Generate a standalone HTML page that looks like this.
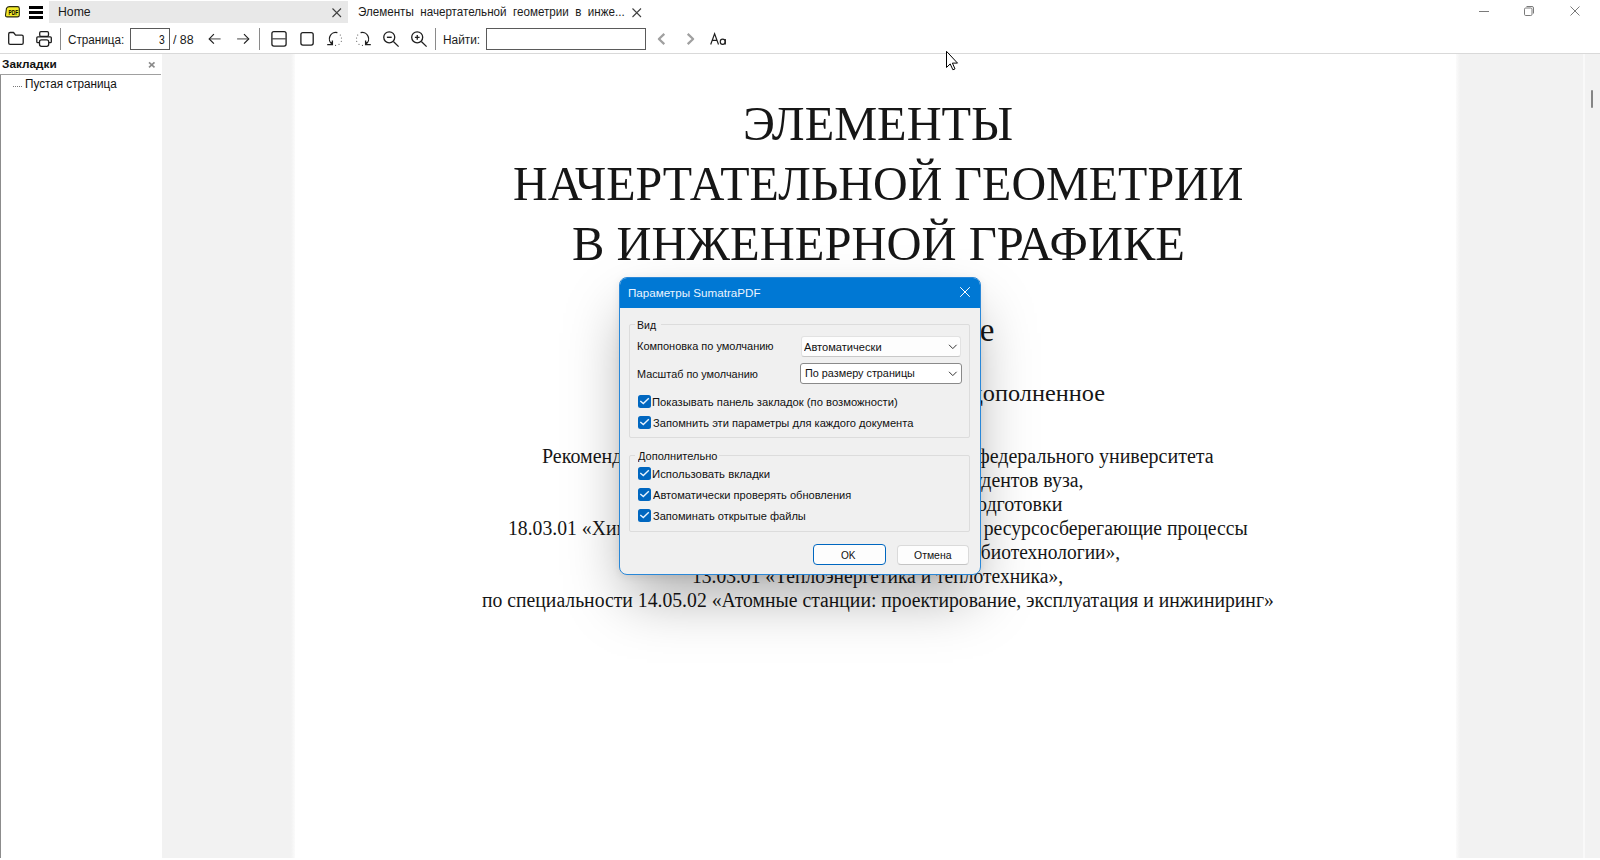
<!DOCTYPE html>
<html><head><meta charset="utf-8">
<style>
*{margin:0;padding:0;box-sizing:border-box}
html,body{width:1600px;height:860px;overflow:hidden;background:#fff;font-family:"Liberation Sans",sans-serif;color:#000}
.a{position:absolute}
.t{position:absolute;white-space:nowrap;line-height:1}
svg{position:absolute;overflow:visible}
</style></head><body>
<div class="a" style="left:0px;top:0px;width:1600px;height:54px;background:#fff;"></div>
<div class="a" style="left:49px;top:1px;width:299px;height:22px;background:#e8e8e8;"></div>
<div class="a" style="left:0px;top:53px;width:1600px;height:1px;background:#d9d9d9;"></div>
<div class="a" style="left:0px;top:54px;width:162px;height:806px;background:#fff;"></div>
<div class="a" style="left:0px;top:74px;width:161px;height:1px;background:#a0a0a0;"></div>
<div class="a" style="left:0px;top:75px;width:1px;height:785px;background:#8c8c8c;"></div>
<div class="a" style="left:162px;top:54px;width:1438px;height:806px;background:#f2f2f2;"></div>
<div class="a" style="left:295px;top:54px;width:1161px;height:806px;background:#fff;"></div>
<div class="a" style="left:291px;top:54px;width:4px;height:806px;background:linear-gradient(to right,#f2f2f2,#fbfbfb);"></div>
<div class="a" style="left:1456px;top:54px;width:4px;height:806px;background:linear-gradient(to left,#f2f2f2,#fbfbfb);"></div>
<div class="a" style="left:1583px;top:54px;width:2px;height:806px;background:#f9f9f9;"></div>
<div class="a" style="left:1591px;top:90px;width:2px;height:18px;background:#858585;border-radius:1px"></div>
<svg style="left:0px;top:0px;" width="24" height="24" viewBox="0 0 24 24"><path d="M6.5 8.2 Q7.5 6.6 9.5 6.6 L17.5 6.6 Q19.3 6.6 19.3 8.4 L19.3 15.2 Q19.3 16.9 17.5 16.9 L7.2 16.9 Q5.3 16.9 5.5 15 Z" fill="#f2ea2a" stroke="#2b2b10" stroke-width="1.1"/>
<text x="8.6" y="15" font-family="Liberation Sans" font-weight="bold" font-size="7" fill="#000" textLength="9.5" lengthAdjust="spacingAndGlyphs">PDF</text></svg>
<div class="a" style="left:29px;top:6px;width:14px;height:3px;background:#000;"></div>
<div class="a" style="left:29px;top:11px;width:14px;height:3px;background:#000;"></div>
<div class="a" style="left:29px;top:16px;width:14px;height:3px;background:#000;"></div>
<div class="t" style="left:58.02px;top:6.00px;font-size:12px;color:#1a1a1a;font-weight:normal;font-family:'Liberation Sans',sans-serif;transform:scaleX(1.0203);transform-origin:left top;">Home</div>
<svg style="left:320px;top:0px;" width="40" height="24" viewBox="320 0 40 24"><path d="M332.5 8.5 L341 17 M341 8.5 L332.5 17" stroke="#404040" stroke-width="1.1"/></svg>
<div class="t" style="left:358.36px;top:6.00px;font-size:12px;color:#1a1a1a;font-weight:normal;font-family:'Liberation Sans',sans-serif;transform:scaleX(0.9690);transform-origin:left top;">Элементы&nbsp; начертательной&nbsp; геометрии&nbsp; в&nbsp; инже...</div>
<svg style="left:620px;top:0px;" width="40" height="24" viewBox="620 0 40 24"><path d="M632.5 8.5 L641 17 M641 8.5 L632.5 17" stroke="#404040" stroke-width="1.1"/></svg>
<svg style="left:1460px;top:0px;" width="140" height="24" viewBox="1460 0 140 24"><path d="M1479 11.5 H1489" stroke="#7a7a7a" stroke-width="1"/>
<rect x="1524.5" y="8" width="7.5" height="7.5" rx="1.2" fill="none" stroke="#7a7a7a" stroke-width="1"/>
<path d="M1526.5 6.5 H1532 Q1533.5 6.5 1533.5 8 V13.5" fill="none" stroke="#7a7a7a" stroke-width="1"/>
<path d="M1570.5 6.5 L1579.5 15.5 M1579.5 6.5 L1570.5 15.5" stroke="#7a7a7a" stroke-width="1"/></svg>
<svg style="left:0px;top:24px;" width="60" height="30" viewBox="0 24 60 30"><path d="M8.7 33.9 Q8.7 32.5 10.1 32.5 L13.5 32.5 L15.6 35.2 L21.8 35.2 Q23.2 35.2 23.2 36.6 L23.2 42.9 Q23.2 44.3 21.8 44.3 L10.1 44.3 Q8.7 44.3 8.7 42.9 Z" fill="none" stroke="#1e1e1e" stroke-width="1.3" stroke-linejoin="round"/></svg>
<svg style="left:0px;top:24px;" width="60" height="30" viewBox="0 24 60 30"><rect x="39.7" y="31.7" width="8.8" height="4.6" rx="1.2" fill="none" stroke="#1e1e1e" stroke-width="1.3"/>
<path d="M39 42.7 L37.8 42.7 Q36.8 42.7 36.8 41.7 L36.8 37.8 Q36.8 36.8 37.8 36.8 L50.3 36.8 Q51.3 36.8 51.3 37.8 L51.3 41.7 Q51.3 42.7 50.3 42.7 L49 42.7" fill="none" stroke="#1e1e1e" stroke-width="1.3"/>
<rect x="39.5" y="39.8" width="9.2" height="6.5" rx="2" fill="#fff" stroke="#1e1e1e" stroke-width="1.3"/></svg>
<div class="a" style="left:60px;top:28px;width:1px;height:22px;background:#8a8a8a;"></div>
<div class="t" style="left:68.11px;top:34.00px;font-size:12.5px;color:#1a1a1a;font-weight:normal;font-family:'Liberation Sans',sans-serif;transform:scaleX(0.9363);transform-origin:left top;">Страница:</div>
<div class="a" style="left:130px;top:28px;width:40px;height:22px;background:#fff;border:1.3px solid #5a5a5a"></div>
<div class="t" style="left:158.89px;top:34.00px;font-size:12px;color:#111;font-weight:normal;font-family:'Liberation Sans',sans-serif;transform:scaleX(0.8596);transform-origin:left top;">3</div>
<div class="t" style="left:173.00px;top:34.00px;font-size:12px;color:#1a1a1a;font-weight:normal;font-family:'Liberation Sans',sans-serif;transform:scaleX(1.0308);transform-origin:left top;">/ 88</div>
<svg style="left:200px;top:24px;" width="60" height="30" viewBox="200 24 60 30"><path d="M220.6 38.9 H210" stroke="#6f6f6f" stroke-width="1.3"/>
<path d="M213.9 34.2 L209.2 38.9 L213.9 43.6" fill="none" stroke="#1e1e1e" stroke-width="1.2"/>
<path d="M237.1 38.9 H247.8" stroke="#6f6f6f" stroke-width="1.3"/>
<path d="M244 34.2 L248.7 38.9 L244 43.6" fill="none" stroke="#1e1e1e" stroke-width="1.2"/></svg>
<div class="a" style="left:259px;top:28px;width:1px;height:22px;background:#8a8a8a;"></div>
<svg style="left:260px;top:24px;" width="60" height="30" viewBox="260 24 60 30"><rect x="271.9" y="31.6" width="14.2" height="14.5" rx="2" fill="none" stroke="#1e1e1e" stroke-width="1.3"/>
<path d="M272 38.8 H286" stroke="#505050" stroke-width="1.3"/>
<rect x="300.9" y="32.6" width="12.3" height="12.5" rx="2" fill="none" stroke="#1e1e1e" stroke-width="1.3"/></svg>
<svg style="left:320px;top:24px;" width="30" height="30" viewBox="320 24 30 30"><path d="M337.4 32.7 A6.4 6.4 0 0 0 332.2 44.2" fill="none" stroke="#1e1e1e" stroke-width="1.3"/>
<path d="M332.4 40.6 V44.6 H327.2" fill="none" stroke="#1e1e1e" stroke-width="1.3"/>
<path d="M332.6 44.1 L330.4 42.4 L332.4 41.8 Z" fill="#1e1e1e"/>
<g fill="#444"><circle cx="340.3" cy="35" r="0.55"/><circle cx="341.4" cy="38" r="0.55"/><circle cx="341.3" cy="41.3" r="0.55"/><circle cx="339" cy="44.2" r="0.55"/><circle cx="335.6" cy="45.4" r="0.55"/></g></svg>
<svg style="left:350px;top:24px;" width="30" height="30" viewBox="350 24 30 30"><path d="M360.6 32.7 A6.4 6.4 0 0 1 365.8 44.2" fill="none" stroke="#1e1e1e" stroke-width="1.3"/>
<path d="M365.6 40.6 V44.6 H370.8" fill="none" stroke="#1e1e1e" stroke-width="1.3"/>
<path d="M365.4 44.1 L367.6 42.4 L365.6 41.8 Z" fill="#1e1e1e"/>
<g fill="#444"><circle cx="357.7" cy="35" r="0.55"/><circle cx="356.6" cy="38" r="0.55"/><circle cx="356.7" cy="41.3" r="0.55"/><circle cx="359" cy="44.2" r="0.55"/><circle cx="362.4" cy="45.4" r="0.55"/></g></svg>
<svg style="left:378px;top:24px;" width="60" height="30" viewBox="378 24 60 30"><circle cx="389.25" cy="37.3" r="5.5" fill="none" stroke="#1e1e1e" stroke-width="1.3"/>
<path d="M393.4 41.5 L398.6 46.6" stroke="#1e1e1e" stroke-width="1.3"/>
<path d="M386.9 37.3 H391.7" stroke="#1e1e1e" stroke-width="1.4"/>
<circle cx="417.2" cy="37.3" r="5.5" fill="none" stroke="#1e1e1e" stroke-width="1.3"/>
<path d="M421.35 41.5 L426.6 46.6" stroke="#1e1e1e" stroke-width="1.3"/>
<path d="M414.9 37.3 H419.6 M417.25 35 V39.8" stroke="#1e1e1e" stroke-width="1.3"/></svg>
<div class="a" style="left:435px;top:28px;width:1px;height:22px;background:#8a8a8a;"></div>
<div class="t" style="left:442.95px;top:34.00px;font-size:12px;color:#1a1a1a;font-weight:normal;font-family:'Liberation Sans',sans-serif;transform:scaleX(0.9882);transform-origin:left top;">Найти:</div>
<div class="a" style="left:486px;top:28px;width:160px;height:22px;background:#fff;border:1.3px solid #5a5a5a"></div>
<svg style="left:650px;top:24px;" width="60" height="30" viewBox="650 24 60 30"><path d="M664.3 33.9 L658.9 39 L664.3 44.1" fill="none" stroke="#a0a0a0" stroke-width="2.3" stroke-linejoin="round"/>
<path d="M687.7 33.9 L693.1 39 L687.7 44.1" fill="none" stroke="#a0a0a0" stroke-width="2.3" stroke-linejoin="round"/></svg>
<svg style="left:705px;top:24px;" width="30" height="30" viewBox="705 24 30 30"><path d="M710.7 44.5 L714.6 33.7 L718.5 44.5 M712.3 40.3 H716.9" fill="none" stroke="#1e1e1e" stroke-width="1.15"/>
<ellipse cx="722.7" cy="41.7" rx="2.45" ry="2.6" fill="none" stroke="#1e1e1e" stroke-width="1.15"/>
<path d="M725.3 39 V44.6" stroke="#1e1e1e" stroke-width="1.15"/></svg>
<div class="t" style="left:2.40px;top:59.00px;font-size:11.5px;color:#111;font-weight:bold;font-family:'Liberation Sans',sans-serif;transform:scaleX(1.0266);transform-origin:left top;">Закладки</div>
<svg style="left:140px;top:54px;" width="20" height="20" viewBox="140 54 20 20"><path d="M149 62.3 L154.5 67.3 M154.5 62.3 L149 67.3" stroke="#8a8a8a" stroke-width="1.6"/></svg>
<svg style="left:10px;top:80px;" width="20" height="10" viewBox="10 80 20 10"><path d="M13 86.5 H22" stroke="#777" stroke-width="1" stroke-dasharray="1 1"/></svg>
<div class="t" style="left:24.56px;top:78.00px;font-size:12px;color:#111;font-weight:normal;font-family:'Liberation Sans',sans-serif;transform:scaleX(0.9762);transform-origin:left top;">Пустая страница</div>
<div class="t" style="left:742.74px;top:99.00px;font-size:49.5px;color:#161616;font-weight:normal;font-family:'Liberation Serif',serif;transform:scaleX(0.9762);transform-origin:left top;">ЭЛЕМЕНТЫ</div>
<div class="t" style="left:512.76px;top:159.00px;font-size:49.5px;color:#161616;font-weight:normal;font-family:'Liberation Serif',serif;transform:scaleX(0.9697);transform-origin:left top;">НАЧЕРТАТЕЛЬНОЙ ГЕОМЕТРИИ</div>
<div class="t" style="left:572.04px;top:219.00px;font-size:49.5px;color:#161616;font-weight:normal;font-family:'Liberation Serif',serif;transform:scaleX(0.9805);transform-origin:left top;">В ИНЖЕНЕРНОЙ ГРАФИКЕ</div>
<div class="t" style="right:605.50px;text-align:right;top:314.00px;font-size:33px;color:#161616;font-weight:normal;font-family:'Liberation Serif',serif;">Учебное пособие</div>
<div class="t" style="right:494.70px;text-align:right;top:383.00px;font-size:22.5px;color:#161616;font-weight:normal;font-family:'Liberation Serif',serif;transform:scaleX(1.0800);transform-origin:right top;">Издание второе, исправленное и дополненное</div>
<div class="t" style="left:541.80px;top:446.00px;font-size:20px;color:#161616;font-weight:normal;font-family:'Liberation Serif',serif;transform:scaleX(1.0003);transform-origin:left top;">Рекомендовано методическим советом Уральского федерального университета</div>
<div class="t" style="left:673.60px;top:470.00px;font-size:20px;color:#161616;font-weight:normal;font-family:'Liberation Serif',serif;transform:scaleX(0.9903);transform-origin:left top;">в качестве учебного пособия для студентов вуза,</div>
<div class="t" style="left:693.00px;top:494.00px;font-size:20px;color:#161616;font-weight:normal;font-family:'Liberation Serif',serif;transform:scaleX(1.0016);transform-origin:left top;">обучающихся по направлениям подготовки</div>
<div class="t" style="left:507.83px;top:518.00px;font-size:20px;color:#161616;font-weight:normal;font-family:'Liberation Serif',serif;transform:scaleX(0.9848);transform-origin:left top;">18.03.01 «Химическая технология», 18.03.02 «Энерго- и ресурсосберегающие процессы</div>
<div class="t" style="left:636.31px;top:542.00px;font-size:20px;color:#161616;font-weight:normal;font-family:'Liberation Serif',serif;transform:scaleX(0.9736);transform-origin:left top;">в химической технологии, нефтехимии и биотехнологии»,</div>
<div class="t" style="left:692.14px;top:566.00px;font-size:20px;color:#161616;font-weight:normal;font-family:'Liberation Serif',serif;transform:scaleX(0.9772);transform-origin:left top;">13.03.01 «Теплоэнергетика и теплотехника»,</div>
<div class="t" style="left:481.91px;top:590.00px;font-size:20px;color:#161616;font-weight:normal;font-family:'Liberation Serif',serif;transform:scaleX(0.9846);transform-origin:left top;">по специальности 14.05.02 «Атомные станции: проектирование, эксплуатация и инжиниринг»</div>
<div class="a" style="left:619px;top:277px;width:362px;height:298px;border-radius:8px;box-shadow:0 28px 56px -8px rgba(0,0,0,0.34),0 2px 8px rgba(0,0,0,0.08);background:#f0f0f0;border:1px solid #2a88d8;overflow:hidden"><div class="a" style="left:0;top:0;width:362px;height:30px;background:#0078d4"></div></div>
<div class="t" style="left:627.97px;top:288.00px;font-size:11.5px;color:#eaf4ff;font-weight:normal;font-family:'Liberation Sans',sans-serif;transform:scaleX(1.0120);transform-origin:left top;">Параметры SumatraPDF</div>
<svg style="left:950px;top:280px;" width="30" height="25" viewBox="950 280 30 25"><path d="M960.2 287.2 L969.8 296.8 M969.8 287.2 L960.2 296.8" stroke="#fff" stroke-width="1"/></svg>
<div class="a" style="left:629px;top:324px;width:341px;height:114px;border:1px solid #dcdcdc;border-radius:2px"></div>
<div class="a" style="left:629px;top:455px;width:341px;height:77px;border:1px solid #dcdcdc;border-radius:2px"></div>
<div class="a" style="left:635px;top:318px;width:26px;height:10px;background:#f0f0f0;"></div>
<div class="a" style="left:635px;top:450px;width:84px;height:10px;background:#f0f0f0;"></div>
<div class="t" style="left:636.66px;top:320.00px;font-size:11px;color:#111;font-weight:normal;font-family:'Liberation Sans',sans-serif;transform:scaleX(0.9569);transform-origin:left top;">Вид</div>
<div class="t" style="left:637.94px;top:451.00px;font-size:11px;color:#111;font-weight:normal;font-family:'Liberation Sans',sans-serif;transform:scaleX(1.0032);transform-origin:left top;">Дополнительно</div>
<div class="t" style="left:636.62px;top:341.00px;font-size:11px;color:#111;font-weight:normal;font-family:'Liberation Sans',sans-serif;transform:scaleX(0.9980);transform-origin:left top;">Компоновка по умолчанию</div>
<div class="t" style="left:636.63px;top:369.00px;font-size:11px;color:#111;font-weight:normal;font-family:'Liberation Sans',sans-serif;transform:scaleX(0.9858);transform-origin:left top;">Масштаб по умолчанию</div>
<div class="a" style="left:801px;top:336px;width:160px;height:21px;background:#fdfdfd;border:1px solid #e2e2e2;border-bottom-color:#c8c8c8;border-radius:3px"></div>
<div class="t" style="left:804.40px;top:342.00px;font-size:11px;color:#111;font-weight:normal;font-family:'Liberation Sans',sans-serif;transform:scaleX(1.0089);transform-origin:left top;">Автоматически</div>
<div class="a" style="left:800px;top:363px;width:162px;height:21px;background:#fff;border:1px solid #8a8a8a;border-radius:3px"></div>
<div class="t" style="left:804.93px;top:368.00px;font-size:11px;color:#111;font-weight:normal;font-family:'Liberation Sans',sans-serif;transform:scaleX(0.9841);transform-origin:left top;">По размеру страницы</div>
<svg style="left:940px;top:335px;" width="25" height="50" viewBox="940 335 25 50"><path d="M949 344.8 L952.8 348.6 L956.6 344.8" fill="none" stroke="#333" stroke-width="1"/>
<path d="M949 371.8 L952.8 375.6 L956.6 371.8" fill="none" stroke="#333" stroke-width="1"/></svg>
<div class="a" style="left:638px;top:395px;width:13px;height:13px;background:#0067c0;border-radius:2.5px"></div>
<svg style="left:636px;top:393px;" width="18" height="18" viewBox="636 393 18 18"><path d="M640.3 401 L643.3 403.6 L648.8 398.3" fill="none" stroke="#e8f4ff" stroke-width="1.4"/></svg>
<div class="t" style="left:652.40px;top:397.00px;font-size:11px;color:#111;font-weight:normal;font-family:'Liberation Sans',sans-serif;transform:scaleX(1.0216);transform-origin:left top;">Показывать панель закладок (по возможности)</div>
<div class="a" style="left:638px;top:416px;width:13px;height:13px;background:#0067c0;border-radius:2.5px"></div>
<svg style="left:636px;top:414px;" width="18" height="18" viewBox="636 414 18 18"><path d="M640.3 422 L643.3 424.6 L648.8 419.3" fill="none" stroke="#e8f4ff" stroke-width="1.4"/></svg>
<div class="t" style="left:652.91px;top:418.00px;font-size:11px;color:#111;font-weight:normal;font-family:'Liberation Sans',sans-serif;transform:scaleX(1.0120);transform-origin:left top;">Запомнить эти параметры для каждого документа</div>
<div class="a" style="left:638px;top:467px;width:13px;height:13px;background:#0067c0;border-radius:2.5px"></div>
<svg style="left:636px;top:465px;" width="18" height="18" viewBox="636 465 18 18"><path d="M640.3 473 L643.3 475.6 L648.8 470.3" fill="none" stroke="#e8f4ff" stroke-width="1.4"/></svg>
<div class="t" style="left:652.39px;top:469.00px;font-size:11px;color:#111;font-weight:normal;font-family:'Liberation Sans',sans-serif;transform:scaleX(1.0309);transform-origin:left top;">Использовать вкладки</div>
<div class="a" style="left:638px;top:488px;width:13px;height:13px;background:#0067c0;border-radius:2.5px"></div>
<svg style="left:636px;top:486px;" width="18" height="18" viewBox="636 486 18 18"><path d="M640.3 494 L643.3 496.6 L648.8 491.3" fill="none" stroke="#e8f4ff" stroke-width="1.4"/></svg>
<div class="t" style="left:653.30px;top:490.00px;font-size:11px;color:#111;font-weight:normal;font-family:'Liberation Sans',sans-serif;transform:scaleX(1.0083);transform-origin:left top;">Автоматически проверять обновления</div>
<div class="a" style="left:638px;top:509px;width:13px;height:13px;background:#0067c0;border-radius:2.5px"></div>
<svg style="left:636px;top:507px;" width="18" height="18" viewBox="636 507 18 18"><path d="M640.3 515 L643.3 517.6 L648.8 512.3" fill="none" stroke="#e8f4ff" stroke-width="1.4"/></svg>
<div class="t" style="left:652.91px;top:511.00px;font-size:11px;color:#111;font-weight:normal;font-family:'Liberation Sans',sans-serif;transform:scaleX(1.0066);transform-origin:left top;">Запоминать открытые файлы</div>
<div class="a" style="left:813px;top:544px;width:73px;height:21px;background:#fdfdfd;border:1.6px solid #0067c0;border-radius:4px"></div>
<div class="t" style="left:841.15px;top:550.00px;font-size:11px;color:#111;font-weight:normal;font-family:'Liberation Sans',sans-serif;transform:scaleX(0.9156);transform-origin:left top;">OK</div>
<div class="a" style="left:897px;top:544.5px;width:72px;height:20px;background:#fdfdfd;border:1px solid #dadada;border-bottom-color:#c4c4c4;border-radius:4px"></div>
<div class="t" style="left:913.53px;top:550.00px;font-size:11px;color:#111;font-weight:normal;font-family:'Liberation Sans',sans-serif;transform:scaleX(0.9502);transform-origin:left top;">Отмена</div>
<div class="a" style="left:0px;top:858px;width:1600px;height:2px;background:#fff;"></div>
<svg style="left:940px;top:45px;" width="25" height="30" viewBox="940 45 25 30"><path d="M946.5 51.3 L946.5 67.5 L950.2 63.9 L952.9 69.8 L955 68.9 L952.4 63.1 L957.5 63.1 Z" fill="#fff" stroke="#000" stroke-width="1" stroke-linejoin="round"/></svg>
</body></html>
